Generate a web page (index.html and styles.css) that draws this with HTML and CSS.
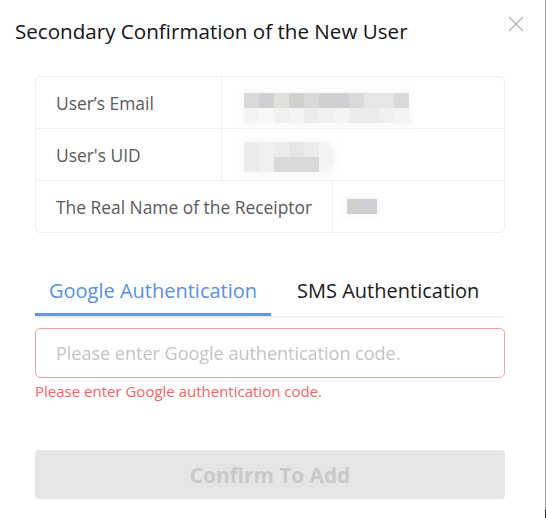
FILE: index.html
```html
<!DOCTYPE html>
<html>
<head>
<meta charset="utf-8">
<link rel="stylesheet" href="styles.css">
</head>
<body>
<div class="dialog">
  <div class="title">Secondary Confirmation of the New User</div>
  <button class="close" aria-label="close">
    <svg width="16" height="16" viewBox="0 0 16 16"><path d="M1 1L15 15M15 1L1 15" stroke="#a9b2c3" stroke-width="1.3" fill="none"/></svg>
  </button>

  <div class="info">
    <div class="row row-fixed">
      <div class="label">User’s Email</div>
      <div class="value">
        <div class="blob b1">
          <span class="s3"></span><span class="s1"></span><span class="s4"></span><span class="s2"></span><span class="s3"></span><span class="s2"></span><span class="s1"></span><span class="s3"></span><span class="s5"></span><span class="s5"></span><span class="s3"></span>
          <span class="s8"></span><span class="s9"></span><span class="s7"></span><span class="s8"></span><span class="s6"></span><span class="s7"></span><span class="s8"></span><span class="s6"></span><span class="s6"></span><span class="s7"></span><span class="s8"></span>
        </div>
      </div>
    </div>
    <div class="row row-fixed">
      <div class="label">User's UID</div>
      <div class="value">
        <div class="blob b2">
          <span class="s6"></span><span class="s7"></span><span class="s6"></span><span class="s5"></span><span class="s6"></span><span class="s8"></span>
          <span class="s6"></span><span class="s7"></span><span class="s3"></span><span class="s3"></span><span class="s3"></span><span class="s8"></span>
        </div>
      </div>
    </div>
    <div class="row">
      <div class="label">The Real Name of the Receiptor</div>
      <div class="value">
        <div class="blob b3">
          <span class="s2"></span><span class="s1"></span>
        </div>
      </div>
    </div>
  </div>

  <div class="tabs">
    <div class="tab active">Google Authentication</div>
    <div class="tab">SMS Authentication</div>
  </div>

  <input class="code-input" type="text" placeholder="Please enter Google authentication code.">
  <div class="error">Please enter Google authentication code.</div>

  <button class="confirm" disabled>Confirm To Add</button>
</div>
</body>
</html>
```

FILE: styles.css
```css
* { box-sizing: border-box; }

html, body {
  margin: 0;
  padding: 0;
  background: #ffffff;
}

body {
  font-family: "Open Sans", "Noto Sans", sans-serif;
}

.dialog {
  position: relative;
  width: 546px;
  height: 518px;
  padding: 17px 40px 0 35px;
  border-right: 1px solid #a3a3a3;
  background: #fff;
}

.dialog::after {
  content: "";
  position: absolute;
  right: -1px;
  bottom: 0;
  width: 1px;
  height: 8px;
  background: #2a2a2a;
}

.title {
  margin-left: -20px;
  font-size: 20.6px;
  line-height: 28px;
  color: #141414;
  font-weight: 500;
}

.close {
  position: absolute;
  top: 16px;
  right: 21px;
  width: 16px;
  height: 16px;
  padding: 0;
  border: 0;
  background: transparent;
  display: block;
}
.close svg { display: block; }

.info {
  margin-top: 31px;
  border: 1px solid #efefef;
  border-radius: 5px;
  overflow: hidden;
}

.row {
  display: flex;
  height: 52px;
  border-top: 1px solid #efefef;
}
.row:first-child { border-top: 0; height: 51px; }

.label {
  flex: none;
  padding: 0 20px;
  display: flex;
  align-items: center;
  font-size: 17.4px;
  color: #5a5a5a;
  border-right: 1px solid #efefef;
  white-space: nowrap;
}
.row-fixed .label { width: 186px; }

.value {
  flex: 1;
  display: flex;
  align-items: center;
  padding-left: 22px;
}

.blob {
  display: grid;
  grid-auto-rows: 15px;
  box-shadow: 0 0 6px 3px #f9f9f9;
}
.blob span { display: block; }
.b1 { grid-template-columns: repeat(11, 15px); margin-top: 10px; }
.b2 { grid-template-columns: repeat(6, 15px); border-radius: 0 12px 12px 0; overflow: hidden; margin-top: 5px; }
.b3 { grid-template-columns: repeat(2, 15px); margin-left: -8px; }

.s1 { background: #d0d0d4; }
.s2 { background: #d2d0cf; }
.s3 { background: #d9d9d9; }
.s4 { background: #e0e0dd; }
.s5 { background: #e5e5e5; }
.s6 { background: #ececec; }
.s7 { background: #f1f0ef; }
.s8 { background: #f4f4f4; }
.s9 { background: #f8f8f8; }

.tabs {
  display: flex;
  margin-top: 40px;
  border-bottom: 2px solid #eef0f5;
}
.tab {
  height: 43px;
  padding: 0 14px;
  font-size: 20px;
  line-height: 36px;
  color: #1a1a1a;
  white-space: nowrap;
}
.tab + .tab { padding-left: 26px; }
.tab.active {
  color: #5b8ee6;
  border-bottom: 3px solid #6496e6;
  margin-bottom: -2px;
}

.code-input {
  display: block;
  width: 100%;
  height: 50px;
  margin-top: 10px;
  padding: 0 20px;
  border: 1px solid #f4a3a3;
  border-radius: 5px;
  font-family: inherit;
  font-size: 18px;
  color: #333;
  outline: none;
  background: #fff;
}
.code-input::placeholder { color: #c4c4c4; }

.error {
  margin-top: 3px;
  font-size: 15px;
  line-height: 20px;
  color: #f26565;
}

.confirm {
  display: block;
  width: 100%;
  height: 49px;
  margin-top: 49px;
  border: 0;
  border-radius: 4px;
  background: #e5e5e5;
  color: #c9c9c9;
  font-family: inherit;
  font-size: 20.8px;
  font-weight: 700;
}
```
